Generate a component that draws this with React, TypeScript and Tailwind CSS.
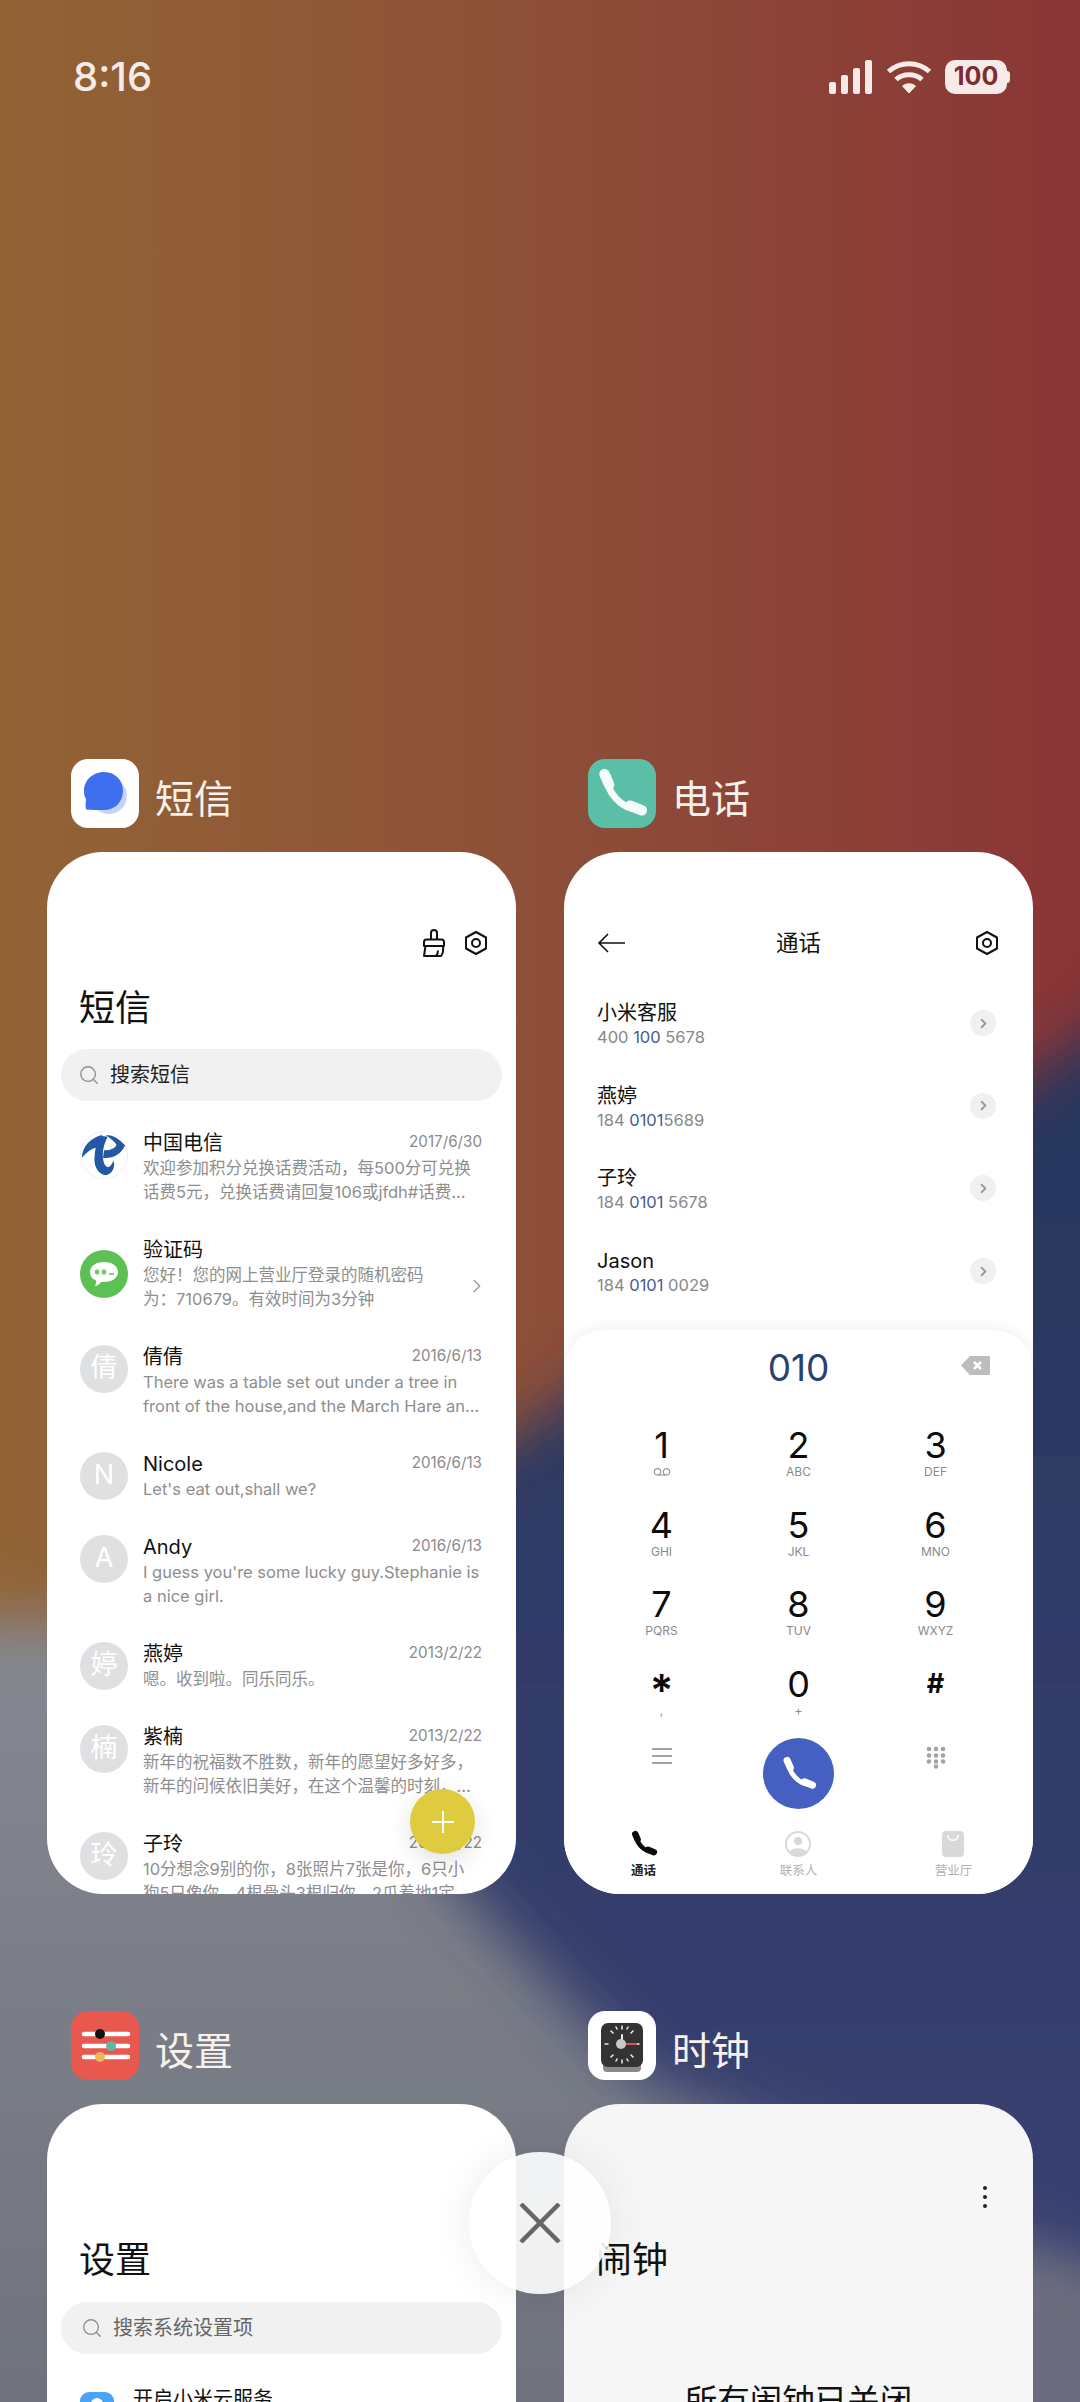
import { ChevronRight, Search } from "lucide-react";
import type { ReactNode } from "react";

const messages = [
  { name: "倩倩", letter: "倩", date: "2016/6/13", lines: ["There was a table set out under a tree in", "front of the house,and the March Hare an..."] },
  { name: "Nicole", letter: "N", date: "2016/6/13", lines: ["Let's eat out,shall we?"] },
  { name: "Andy", letter: "A", date: "2016/6/13", lines: ["I guess you're some lucky guy.Stephanie is", "a nice girl."] },
  { name: "燕婷", letter: "婷", date: "2013/2/22", lines: ["嗯。收到啦。同乐同乐。"] },
  { name: "紫楠", letter: "楠", date: "2013/2/22", lines: ["新年的祝福数不胜数，新年的愿望好多好多，", "新年的问候依旧美好，在这个温馨的时刻，..."] },
  { name: "子玲", letter: "玲", date: "2013/2/22", lines: ["10分想念9别的你，8张照片7张是你，6只小", "狗5只像你，4根骨头3根归你，2爪着地1定"] },
];

const calls = [
  { name: "小米客服", pre: "400 ", hit: "100", post: " 5678" },
  { name: "燕婷", pre: "184 ", hit: "0101", post: "5689" },
  { name: "子玲", pre: "184 ", hit: "0101", post: " 5678" },
  { name: "Jason", pre: "184 ", hit: "0101", post: " 0029" },
];

const keys = [
  { d: "1", l: "" },
  { d: "2", l: "ABC" },
  { d: "3", l: "DEF" },
  { d: "4", l: "GHI" },
  { d: "5", l: "JKL" },
  { d: "6", l: "MNO" },
  { d: "7", l: "PQRS" },
  { d: "8", l: "TUV" },
  { d: "9", l: "WXYZ" },
  { d: "*", l: "," },
  { d: "0", l: "+" },
  { d: "#", l: "" },
];

function Wallpaper() {
  return (
    <svg className="absolute inset-0" width="1080" height="2402" viewBox="0 0 1080 2402">
      <defs>
        <linearGradient id="warm" x1="0" x2="1" y1="0" y2="0">
          <stop offset="0" stopColor="#926435" />
          <stop offset="0.5" stopColor="#8d4f38" />
          <stop offset="1" stopColor="#8a3536" />
        </linearGradient>
        <linearGradient id="grey" x1="0" x2="0" y1="0" y2="1">
          <stop offset="0" stopColor="#858890" />
          <stop offset="1" stopColor="#6c6f7b" />
        </linearGradient>
        <linearGradient id="navy" x1="0" x2="0" y1="0" y2="1">
          <stop offset="0" stopColor="#24355b" />
          <stop offset="1" stopColor="#3b4173" />
        </linearGradient>
        <filter id="soft" x="-20%" y="-20%" width="140%" height="140%">
          <feGaussianBlur stdDeviation="30" />
        </filter>
      </defs>
      <rect width="1080" height="2402" fill="url(#warm)" />
      <rect x="-100" y="1620" width="1300" height="900" fill="url(#grey)" filter="url(#soft)" />
      <path d="M1200 960 L1080 1042 L540 1420 L250 1600 L470 1900 L640 2080 L1200 2330 Z" fill="url(#navy)" filter="url(#soft)" />
      <path d="M1200 2300 L1000 2270 L880 2480 L1200 2500 Z" fill="#6a6c7e" filter="url(#soft)" />
    </svg>
  );
}

function SignalIcon() {
  return (
    <svg width="44" height="34" viewBox="0 0 44 34" fill="#f6ebe7">
      <rect x="0" y="22" width="7" height="12" rx="2" />
      <rect x="12" y="15" width="7" height="19" rx="2" />
      <rect x="24" y="8" width="7" height="26" rx="2" />
      <rect x="36" y="0" width="7" height="34" rx="2" />
    </svg>
  );
}

function WifiIcon() {
  return (
    <svg width="46" height="34" viewBox="0 0 46 34" fill="none" stroke="#f6ebe7" strokeWidth="5">
      <path d="M2.500 11.500C14 1 32 1 43.500 11.500" />
      <path d="M10 19.500C17 13 29 13 36 19.500" />
      <path d="M16.500 26C20 23 26 23 29.500 26L23 33Z" fill="#f6ebe7" strokeWidth="1" strokeLinejoin="round" />
    </svg>
  );
}

function Handset({ size, color, bold }: { size: number; color: string; bold?: boolean }) {
  return (
    <svg width={size} height={size} viewBox="0 0 24 24" fill="none" stroke={color} strokeLinecap="round">
      <path d="M5.500 4.500C5.500 11 11.500 18.500 19 18.500" strokeWidth={bold ? 4 : 3} />
      <path d="M4.500 3.500L6.500 8" strokeWidth={bold ? 5.5 : 4.5} />
      <path d="M15.500 17L20.500 19" strokeWidth={bold ? 5.5 : 4.5} />
    </svg>
  );
}

function HexGear() {
  return (
    <svg width="26" height="26" viewBox="0 0 26 26" fill="none" stroke="#111" strokeWidth="2" strokeLinejoin="round">
      <path d="M13 2L23 7.500V18.500L13 24L3 18.500V7.500Z" />
      <circle cx="13" cy="13" r="4" />
    </svg>
  );
}

function BrushIcon() {
  return (
    <svg width="24" height="28" viewBox="0 0 24 28" fill="none" stroke="#111" strokeWidth="2" strokeLinejoin="round">
      <path d="M9 10.500V4A3 3 0 0 1 15 4V10.500" />
      <path d="M2 17V13A2.500 2.500 0 0 1 4.500 10.500H19.500A2.500 2.500 0 0 1 22 13V17Z" />
      <path d="M3.500 17L2 27H19C21 24.500 21.500 20.500 21 17" />
      <path d="M14 27C15.500 25.500 16 23.500 16 21.500" />
    </svg>
  );
}

function MessageAppIcon() {
  return (
    <svg width="68" height="68" viewBox="0 0 68 68">
      <circle cx="38" cy="36" r="18" fill="#c6d4fa" />
      <path d="M33 12C45 12 52 21 52 31C52 42 44 50 33 50C27 50 20 50 15 49.500C14 45 15 42 15 39C13 36 13 33 13 31C13 21 21 12 33 12Z" fill="#3f6fee" />
    </svg>
  );
}

function SettingsAppIcon() {
  return (
    <svg width="68" height="69" viewBox="0 0 68 69">
      <path d="M13 23H57M13 35H57M13 46H57" stroke="#fff" strokeWidth="4.500" strokeLinecap="round" />
      <circle cx="29" cy="23" r="5" fill="#111" />
      <circle cx="40" cy="35" r="5" fill="#5fb9a2" />
      <circle cx="29" cy="46" r="5" fill="#f2b45a" />
    </svg>
  );
}

function ClockAppIcon() {
  return (
    <svg width="68" height="69" viewBox="0 0 68 69">
      <rect x="15" y="44" width="38" height="17" rx="4" fill="#8a8a8a" />
      <rect x="13" y="12" width="42" height="44" rx="7" fill="#333" />
      <g stroke="#eee" strokeWidth="1.500" strokeLinecap="round">
        <path d="M34 15V18M34 49V52M17 33H20M48 33H51M23 20L25 22M45 20L43 22M23 46L25 44M45 46L43 44M28 16L29 18M40 16L39 18M28 50L29 48M40 50L39 48" />
        <path d="M34 33V24" strokeWidth="2" />
      </g>
      <path d="M34 33H49" stroke="#d9534f" strokeWidth="2" />
      <circle cx="33" cy="33" r="5" fill="#c9c9c9" />
    </svg>
  );
}

function TelecomLogo() {
  return (
    <div className="flex h-[48px] w-[48px] shrink-0 items-center justify-center rounded-full border border-[#eef0f4] bg-white">
      <svg width="46" height="46" viewBox="0 0 48 48" fill="#2457a4">
        <path d="M1 27C1 15 10 6 22 3L20 16C12 16 6 21 1 27Z" />
        <path d="M26 3C34 3 41 8 46 14C42 23 33 28 23 27L24 19C31 19 36 17 37 13C34 9 30 6 26 3Z" />
        <path d="M20 4L28 5C24 12 22 20 23 28C24 35 27 38 30 36C32 34 33 32 34 30C36 36 33 44 26 45C19 45 14 37 14 29C14 20 16 11 20 4Z" />
      </svg>
    </div>
  );
}

function CodeAvatar() {
  return (
    <div className="flex h-[48px] w-[48px] shrink-0 items-center justify-center rounded-full bg-[#5cc152]">
      <svg width="32" height="30" viewBox="0 0 32 30">
        <path d="M16 3C24 3 30 7 30 13C30 19 24 23 16 23C15 23 14 23 13 23C12 25 9 27 7 27C8 25 8.500 23 8 21.500C4 20 2 17 2 13C2 7 8 3 16 3Z" fill="#fff" />
        <path d="M9 10V16M6.500 11.500L11.500 14.500M11.500 11.500L6.500 14.500M16 10V16M13.500 11.500L18.500 14.500M18.500 11.500L13.500 14.500M21 15H26" stroke="#5cc152" strokeWidth="1.300" />
      </svg>
    </div>
  );
}

function LetterAvatar({ letter }: { letter: string }) {
  return (
    <div className="flex h-[48px] w-[48px] shrink-0 items-center justify-center rounded-full bg-[#dfe0e2] text-[27px] text-white">
      {letter}
    </div>
  );
}

function MessageRow({ avatar, name, date, lines, chevron }: { avatar: ReactNode; name: string; date?: string; lines: string[]; chevron?: boolean }) {
  return (
    <div className="flex gap-[15px]">
      {avatar}
      <div className="min-w-0 flex-1">
        <div className="flex h-[24px] items-center justify-between">
          <span className="text-[20px] text-[#111]">{name}</span>
          {date && <span className="text-[15.200px] text-[#8a8a8a]">{date}</span>}
        </div>
        <div className="relative mt-[1px]">
          {lines.map((line) => (
            <div key={line} className="whitespace-nowrap text-[16.500px] leading-[24px] text-[#8e8e8e]">
              {line}
            </div>
          ))}
          {chevron && <ChevronRight className="absolute right-[-6px] top-[12px] text-[#999]" size={22} strokeWidth={1.5} />}
        </div>
      </div>
    </div>
  );
}

function AppHead({ icon, label, iconBg }: { icon: ReactNode; label: string; iconBg: string }) {
  return (
    <div className="mb-[24px] flex h-[69px] items-center gap-[16px] pl-[24px]">
      <div className={`flex h-[69px] w-[68px] items-center justify-center rounded-[17px] ${iconBg}`}>{icon}</div>
      <span className="mt-[9px] text-[39px] leading-none text-[#f8f1ec]">{label}</span>
    </div>
  );
}

function SearchBar({ text, padClass, textColor }: { text: string; padClass: string; textColor: string }) {
  return (
    <div className={`mx-[14px] flex h-[52px] items-center gap-[10px] rounded-full bg-[#f1f1f1] ${padClass}`}>
      <Search size={22} strokeWidth={1.5} className="text-[#8f8f8f]" />
      <span className={`text-[20px] ${textColor}`}>{text}</span>
    </div>
  );
}

function SmsCard() {
  return (
    <div className="relative h-[1042px] overflow-hidden rounded-[56px] bg-white">
      <div className="mt-[79px] flex h-[24px] items-center justify-end gap-[17px] pr-[27px]">
        <BrushIcon />
        <HexGear />
      </div>
      <div className="mt-[28px] pl-[32px] text-[36px] leading-[50px] text-[#111]">短信</div>
      <div className="mt-[16px]">
        <SearchBar text="搜索短信" padClass="pl-[17px]" textColor="text-[#222]" />
      </div>
      <div className="mt-[29.500px] flex flex-col gap-[34px] pl-[33px] pr-[34px]">
        <MessageRow
          avatar={<TelecomLogo />}
          name="中国电信"
          date="2017/6/30"
          lines={["欢迎参加积分兑换话费活动，每500分可兑换", "话费5元，兑换话费请回复106或jfdh#话费..."]}
        />
        <MessageRow
          avatar={<div className="flex h-[72px] items-center"><CodeAvatar /></div>}
          name="验证码"
          lines={["您好！您的网上营业厅登录的随机密码", "为：710679。有效时间为3分钟"]}
          chevron
        />
        {messages.map((m) => (
          <MessageRow key={m.name} avatar={<LetterAvatar letter={m.letter} />} name={m.name} date={m.date} lines={m.lines} />
        ))}
      </div>
      <div className="absolute right-[41px] top-[937px] flex h-[65px] w-[65px] items-center justify-center rounded-full bg-[#dfcb40] shadow-[0_8px_24px_rgba(0,0,0,0.12)]">
        <svg width="24" height="24" viewBox="0 0 24 24" stroke="#fff" strokeWidth="2">
          <path d="M12 1V23M1 12H23" />
        </svg>
      </div>
    </div>
  );
}

function PhoneCard() {
  return (
    <div className="flex h-[1042px] flex-col overflow-hidden rounded-[56px] bg-white">
      <div className="mt-[79px] flex h-[24px] items-center pl-[33px] pr-[33px]">
        <div className="flex-1">
          <svg width="29" height="22" viewBox="0 0 29 22" fill="none" stroke="#111" strokeWidth="1.600">
            <path d="M28 11H2M11 2L2 11L11 20" />
          </svg>
        </div>
        <span className="text-[22.500px] text-[#111]">通话</span>
        <div className="flex flex-1 justify-end">
          <HexGear />
        </div>
      </div>
      <div className="mt-[46px] flex flex-1 flex-col gap-[34.700px] pl-[33px] pr-[37px]">
        {calls.map((c) => (
          <div key={c.name} className="flex items-center justify-between">
            <div>
              <div className="text-[20px] leading-[24px] text-[#111]">{c.name}</div>
              <div className="text-[16.500px] leading-[24px] text-[#888]">
                {c.pre}
                <span className="text-[#4a5a8e]">{c.hit}</span>
                {c.post}
              </div>
            </div>
            <div className="-mt-[4px] flex h-[26px] w-[26px] items-center justify-center rounded-full bg-[#f0f0f0]">
              <ChevronRight size={15} strokeWidth={3} className="text-[#9a9a9a]" />
            </div>
          </div>
        ))}
      </div>
      <div className="h-[564px] rounded-t-[40px] bg-white shadow-[0_-3px_14px_rgba(0,0,0,0.06)]">
        <div className="relative flex h-[48px] translate-y-[13px] items-center justify-center text-[37px] leading-none text-[#2a4270]">
          010
          <svg className="absolute right-[43px] top-[13px]" width="29" height="19" viewBox="0 0 29 19">
            <path d="M9 0H28A1 1 0 0 1 29 1V18A1 1 0 0 1 28 19H9L0 9.500Z" fill="#bdbdbd" />
            <path d="M13 6L20 13M20 6L13 13" stroke="#fff" strokeWidth="2.500" />
          </svg>
        </div>
        <div className="mx-auto mt-[47px] grid w-[411px] grid-cols-3 auto-rows-[79.600px]">
          {keys.map((k) => (
            <div key={k.d} className="flex flex-col items-center">
              <div className="flex h-[40px] items-center text-[36px] leading-none text-[#0c0c0c]">
                {k.d === "*" ? (
                  <span className="translate-y-[6px] text-[44px] font-semibold">*</span>
                ) : k.d === "#" ? (
                  <span className="text-[27px] font-bold">#</span>
                ) : (
                  k.d
                )}
              </div>
              <div className="flex h-[14px] items-center text-[12px] leading-none text-[#8a8a8a]">
                {k.d === "1" ? (
                  <svg width="18" height="8" viewBox="0 0 18 8" fill="none" stroke="#999" strokeWidth="1.200">
                    <circle cx="4.500" cy="3.800" r="3.200" />
                    <circle cx="13.500" cy="3.800" r="3.200" />
                    <path d="M4.500 7H13.500" />
                  </svg>
                ) : (
                  k.l
                )}
              </div>
            </div>
          ))}
        </div>
        <div className="mx-auto -mt-[5px] grid w-[411px] grid-cols-3 items-start justify-items-center">
          <svg className="mt-[9px]" width="20" height="18" viewBox="0 0 20 18" stroke="#a3a3a3" strokeWidth="2">
            <path d="M0 2H20M0 9H20M0 16H20" />
          </svg>
          <div className="flex h-[71px] w-[71px] items-center justify-center rounded-full bg-[#4560c0]">
            <Handset size={38} color="#fff" />
          </div>
          <svg className="mt-[8px]" width="20" height="23" viewBox="0 0 20 23" fill="#a3a3a3">
            {[3, 10, 17].map((x) =>
              [3, 9.5, 15.5].map((y) => <circle key={`${x}-${y}`} cx={x} cy={y} r="2.300" />),
            )}
            <circle cx="10" cy="20.500" r="2.300" />
          </svg>
        </div>
        <div className="mx-auto mt-[21px] grid w-[465px] grid-cols-3 justify-items-center">
          <div className="flex flex-col items-center">
            <div className="flex h-[28px] items-center"><Handset size={28} color="#0c0c0c" bold /></div>
            <div className="mt-[4px] text-[12.500px] font-bold leading-[18px] text-[#222]">通话</div>
          </div>
          <div className="flex flex-col items-center">
            <div className="flex h-[28px] items-center">
              <svg width="26" height="26" viewBox="0 0 26 26">
                <circle cx="13" cy="13" r="12" fill="none" stroke="#d9d9d9" strokeWidth="2" />
                <circle cx="13" cy="10" r="4" fill="#d9d9d9" />
                <path d="M4 21C7 16 19 16 22 21C18 25.500 8 25.500 4 21Z" fill="#d9d9d9" />
              </svg>
            </div>
            <div className="mt-[4px] text-[12.500px] leading-[18px] text-[#b0b0b0]">联系人</div>
          </div>
          <div className="flex flex-col items-center">
            <div className="flex h-[28px] items-center">
              <svg width="22" height="26" viewBox="0 0 22 26">
                <rect width="22" height="26" rx="4" fill="#d9d9d9" />
                <path d="M6 4C6 11 16 11 16 4" fill="none" stroke="#fff" strokeWidth="1.500" />
              </svg>
            </div>
            <div className="mt-[4px] text-[12.500px] leading-[18px] text-[#b0b0b0]">营业厅</div>
          </div>
        </div>
      </div>
    </div>
  );
}

function SettingsCard() {
  return (
    <div className="h-[1042px] overflow-hidden rounded-[56px] bg-white">
      <div className="pl-[32px] pt-[131px] text-[36px] leading-[50px] text-[#111]">设置</div>
      <div className="mt-[17px]">
        <SearchBar text="搜索系统设置项" padClass="pl-[20px]" textColor="text-[#666]" />
      </div>
      <div className="mt-[33px] flex items-start gap-[19px] pl-[33px]">
        <div className="mt-[5px] flex h-[34px] w-[34px] justify-center rounded-[9px] bg-[#4aa4f5] pt-[6px]">
          <div className="h-[12px] w-[12px] rounded-full bg-white" />
        </div>
        <span className="text-[20px] leading-[24px] text-[#111]">开启小米云服务</span>
      </div>
    </div>
  );
}

function ClockCard() {
  return (
    <div className="h-[1042px] overflow-hidden rounded-[56px] bg-[#f6f6f6]">
      <div className="flex justify-end pr-[46px] pt-[82px]">
        <div className="flex flex-col gap-[5px]">
          <div className="h-[4px] w-[4px] rounded-full bg-[#222]" />
          <div className="h-[4px] w-[4px] rounded-full bg-[#222]" />
          <div className="h-[4px] w-[4px] rounded-full bg-[#222]" />
        </div>
      </div>
      <div className="mt-[27px] pl-[32px] text-[36px] leading-[50px] text-[#111]">闹钟</div>
      <div className="mt-[95px] text-center text-[32.500px] leading-[44px] text-[#111]">所有闹钟已关闭</div>
    </div>
  );
}

export default function App() {
  return (
    <div className="relative h-[2402px] w-[1080px] overflow-hidden font-['Inter','Noto_Sans_CJK_SC',sans-serif]">
      <Wallpaper />
      <div className="relative flex h-[154px] items-center justify-between pl-[73px] pr-[70px] text-[#f6ebe7]">
        <span className="text-[40px] font-medium">8:16</span>
        <div className="flex items-center gap-[13px]">
          <SignalIcon />
          <WifiIcon />
          <div className="flex items-center">
            <div className="flex h-[34px] w-[62px] items-center justify-center rounded-[10px] bg-[#f6ebe7] text-[25px] font-bold text-[#7d2c30]">
              100
            </div>
            <div className="h-[12px] w-[3px] rounded-r-full bg-[#f6ebe7]" />
          </div>
        </div>
      </div>
      <div className="relative grid grid-cols-[469px_469px] gap-x-[48px] gap-y-[117px] pl-[47px] pt-[605px]">
        <div>
          <AppHead label="短信" iconBg="bg-white" icon={<MessageAppIcon />} />
          <SmsCard />
        </div>
        <div>
          <AppHead label="电话" iconBg="bg-[#5bbfa8]" icon={<Handset size={56} color="#f4fbf8" />} />
          <PhoneCard />
        </div>
        <div>
          <AppHead label="设置" iconBg="bg-[#e9584f]" icon={<SettingsAppIcon />} />
          <SettingsCard />
        </div>
        <div>
          <AppHead label="时钟" iconBg="bg-white" icon={<ClockAppIcon />} />
          <ClockCard />
        </div>
      </div>
      <div className="absolute left-[469px] top-[2152px] flex h-[142px] w-[142px] items-center justify-center rounded-full bg-white/90 shadow-[0_0_40px_rgba(0,0,0,0.08)]">
        <svg width="42" height="40" viewBox="0 0 42 40" stroke="#666" strokeWidth="4.500">
          <path d="M2 1L40 39M40 1L2 39" />
        </svg>
      </div>
    </div>
  );
}
